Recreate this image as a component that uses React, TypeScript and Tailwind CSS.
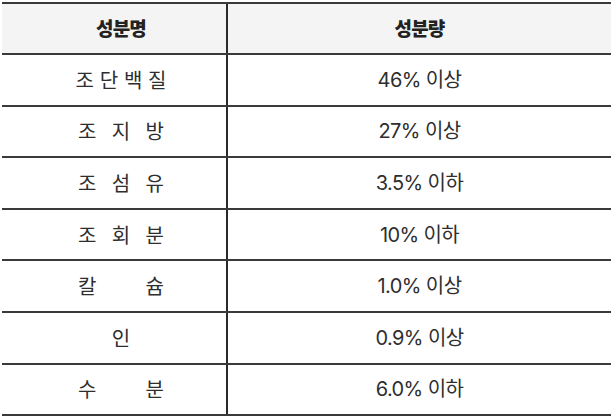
const rows: { name: string[]; amount: string }[] = [
  { name: ["조", "단", "백", "질"], amount: "46% 이상" },
  { name: ["조", "지", "방"], amount: "27% 이상" },
  { name: ["조", "섬", "유"], amount: "3.5% 이하" },
  { name: ["조", "회", "분"], amount: "10% 이하" },
  { name: ["칼", "슘"], amount: "1.0% 이상" },
  { name: ["인"], amount: "0.9% 이상" },
  { name: ["수", "분"], amount: "6.0% 이하" },
];

export default function App() {
  return (
    <div className="w-[613px] h-[420px] bg-white pt-[2px] px-[2px] text-[#2e2e2e] font-['Inter','Noto_Sans_CJK_KR',sans-serif]">
      {/* Header */}
      <div className="grid grid-cols-[226px_1fr] h-[53px] bg-[#f4f4f4] border-t-2 border-b-2 border-[#3a3a3a]">
        <div className="flex items-center justify-center pl-[14px] border-r-2 border-[#2a2a2a] font-['Noto_Sans_CJK_KR',sans-serif] font-black text-[19px] tracking-[-0.8px] text-[#222]">
          성분명
        </div>
        <div className="flex items-center justify-center font-['Noto_Sans_CJK_KR',sans-serif] font-black text-[19px] tracking-[-0.8px] text-[#222]">
          성분량
        </div>
      </div>

      {/* Rows */}
      {rows.map((row) => (
        <div
          key={row.amount + row.name.join("")}
          className="grid grid-cols-[226px_1fr] h-[51.6px] border-b-2 border-[#3a3a3a]"
        >
          <div className="flex items-center justify-center pl-[14px] border-r-2 border-[#2a2a2a]">
            <div
              className={
                "flex font-['Noto_Sans_CJK_KR',sans-serif] text-[20px] " +
                (row.name.length === 1
                  ? "justify-center"
                  : row.name.length === 4
                  ? "justify-between w-[91px]"
                  : "justify-between w-[86px]")
              }
            >
              {row.name.map((c, i) => (
                <span key={i}>{c}</span>
              ))}
            </div>
          </div>
          <div className="flex items-center justify-center text-[20px] tracking-[-0.6px]">
            {row.amount}
          </div>
        </div>
      ))}
    </div>
  );
}
